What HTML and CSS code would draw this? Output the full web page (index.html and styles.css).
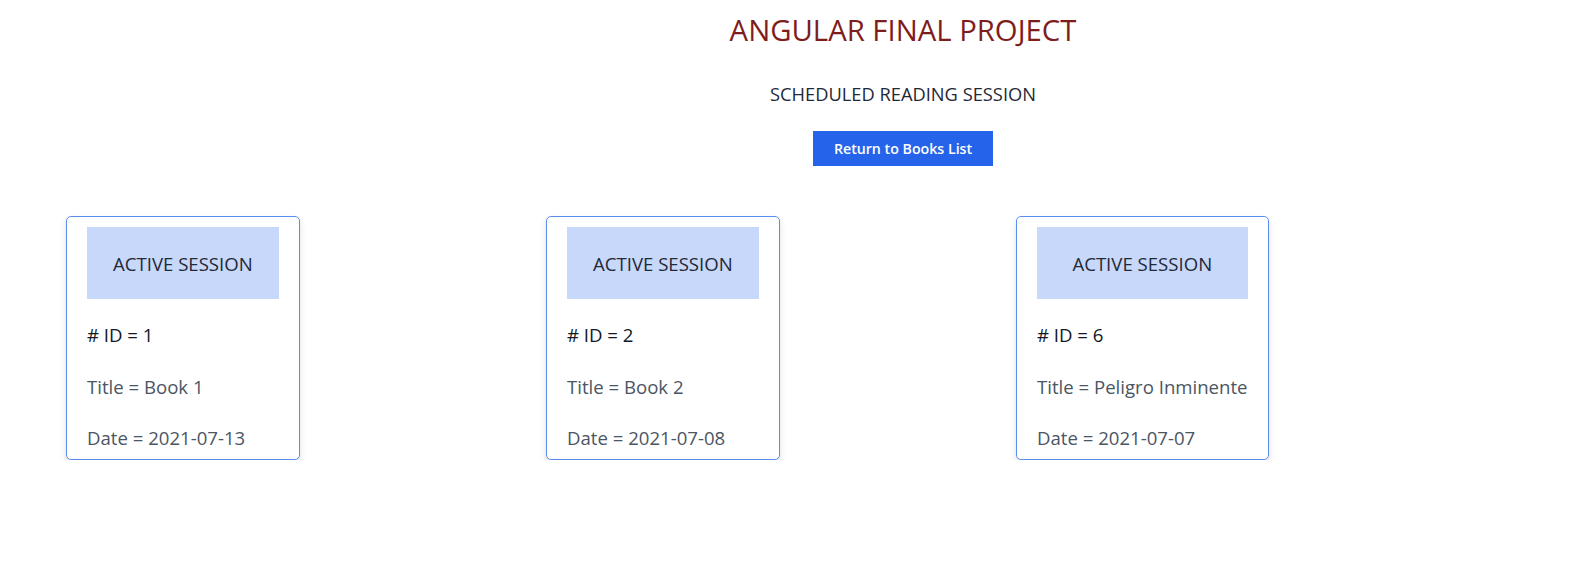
FILE: index.html
```html
<!DOCTYPE html>
<html lang="en">
<head>
<meta charset="utf-8">
<title>Angular Final Project</title>
<link rel="stylesheet" href="styles.css">
</head>
<body>
  <header class="page-head">
    <h1 class="app-title">ANGULAR FINAL PROJECT</h1>
    <h2 class="section-title">SCHEDULED READING SESSION</h2>
    <button class="btn-return" type="button">Return to Books List</button>
  </header>
  <main class="sessions">
    <div class="session-col">
      <div class="session-card">
        <div class="session-head">ACTIVE SESSION</div>
        <p class="session-id"># ID = 1</p>
        <p class="session-field">Title = Book 1</p>
        <p class="session-field">Date = 2021-07-13</p>
      </div>
    </div>
    <div class="session-col">
      <div class="session-card">
        <div class="session-head">ACTIVE SESSION</div>
        <p class="session-id"># ID = 2</p>
        <p class="session-field">Title = Book 2</p>
        <p class="session-field">Date = 2021-07-08</p>
      </div>
    </div>
    <div class="session-col">
      <div class="session-card">
        <div class="session-head">ACTIVE SESSION</div>
        <p class="session-id"># ID = 6</p>
        <p class="session-field">Title = Peligro Inminente</p>
        <p class="session-field">Date = 2021-07-07</p>
      </div>
    </div>
  </main>
</body>
</html>
```

FILE: styles.css
```css
* { box-sizing: border-box; }

body {
  margin: 0;
  font-family: "Open Sans", "Noto Sans", sans-serif;
  color: #1f2937;
  background: #ffffff;
}

.page-head {
  display: flex;
  flex-direction: column;
  align-items: center;
  padding-left: 213px;
}

.app-title {
  margin: 6px 0 0;
  font-size: 29.3px;
  line-height: 48px;
  font-weight: 400;
  color: #7f1d1d;
}

.section-title {
  margin: 26px 0 0;
  font-size: 18.3px;
  line-height: 27px;
  font-weight: 500;
  color: #1f2937;
}

.btn-return {
  margin-top: 24px;
  height: 35px;
  padding: 0 20px;
  border: 1px solid #2563eb;
  border-radius: 0;
  background: #2563eb;
  color: #ffffff;
  font-family: inherit;
  font-size: 14.2px;
  font-weight: 600;
}

.sessions {
  display: grid;
  grid-template-columns: 480px 470px auto;
  align-items: start;
  margin-top: 50px;
  padding-left: 66px;
}

.session-card {
  display: inline-block;
  border: 1px solid #5b8def;
  border-radius: 5px;
  padding: 10px 20px 8px;
  background: #ffffff;
  box-shadow: 0 4px 10px -1px rgba(0, 0, 0, 0.13), 0 2px 4px -2px rgba(0, 0, 0, 0.1);
}

.session-head {
  padding: 22.5px 26px;
  background: #c8d8fa;
  text-align: center;
  font-size: 18.6px;
  line-height: 27px;
  color: #1f2937;
  white-space: nowrap;
}

.session-id,
.session-field {
  margin: 24.6px 0 0;
  font-size: 18.6px;
  line-height: 27px;
  white-space: nowrap;
}

.session-id {
  margin-top: 22px;
  color: #111827;
}

.session-field {
  color: #4b5563;
}
```
